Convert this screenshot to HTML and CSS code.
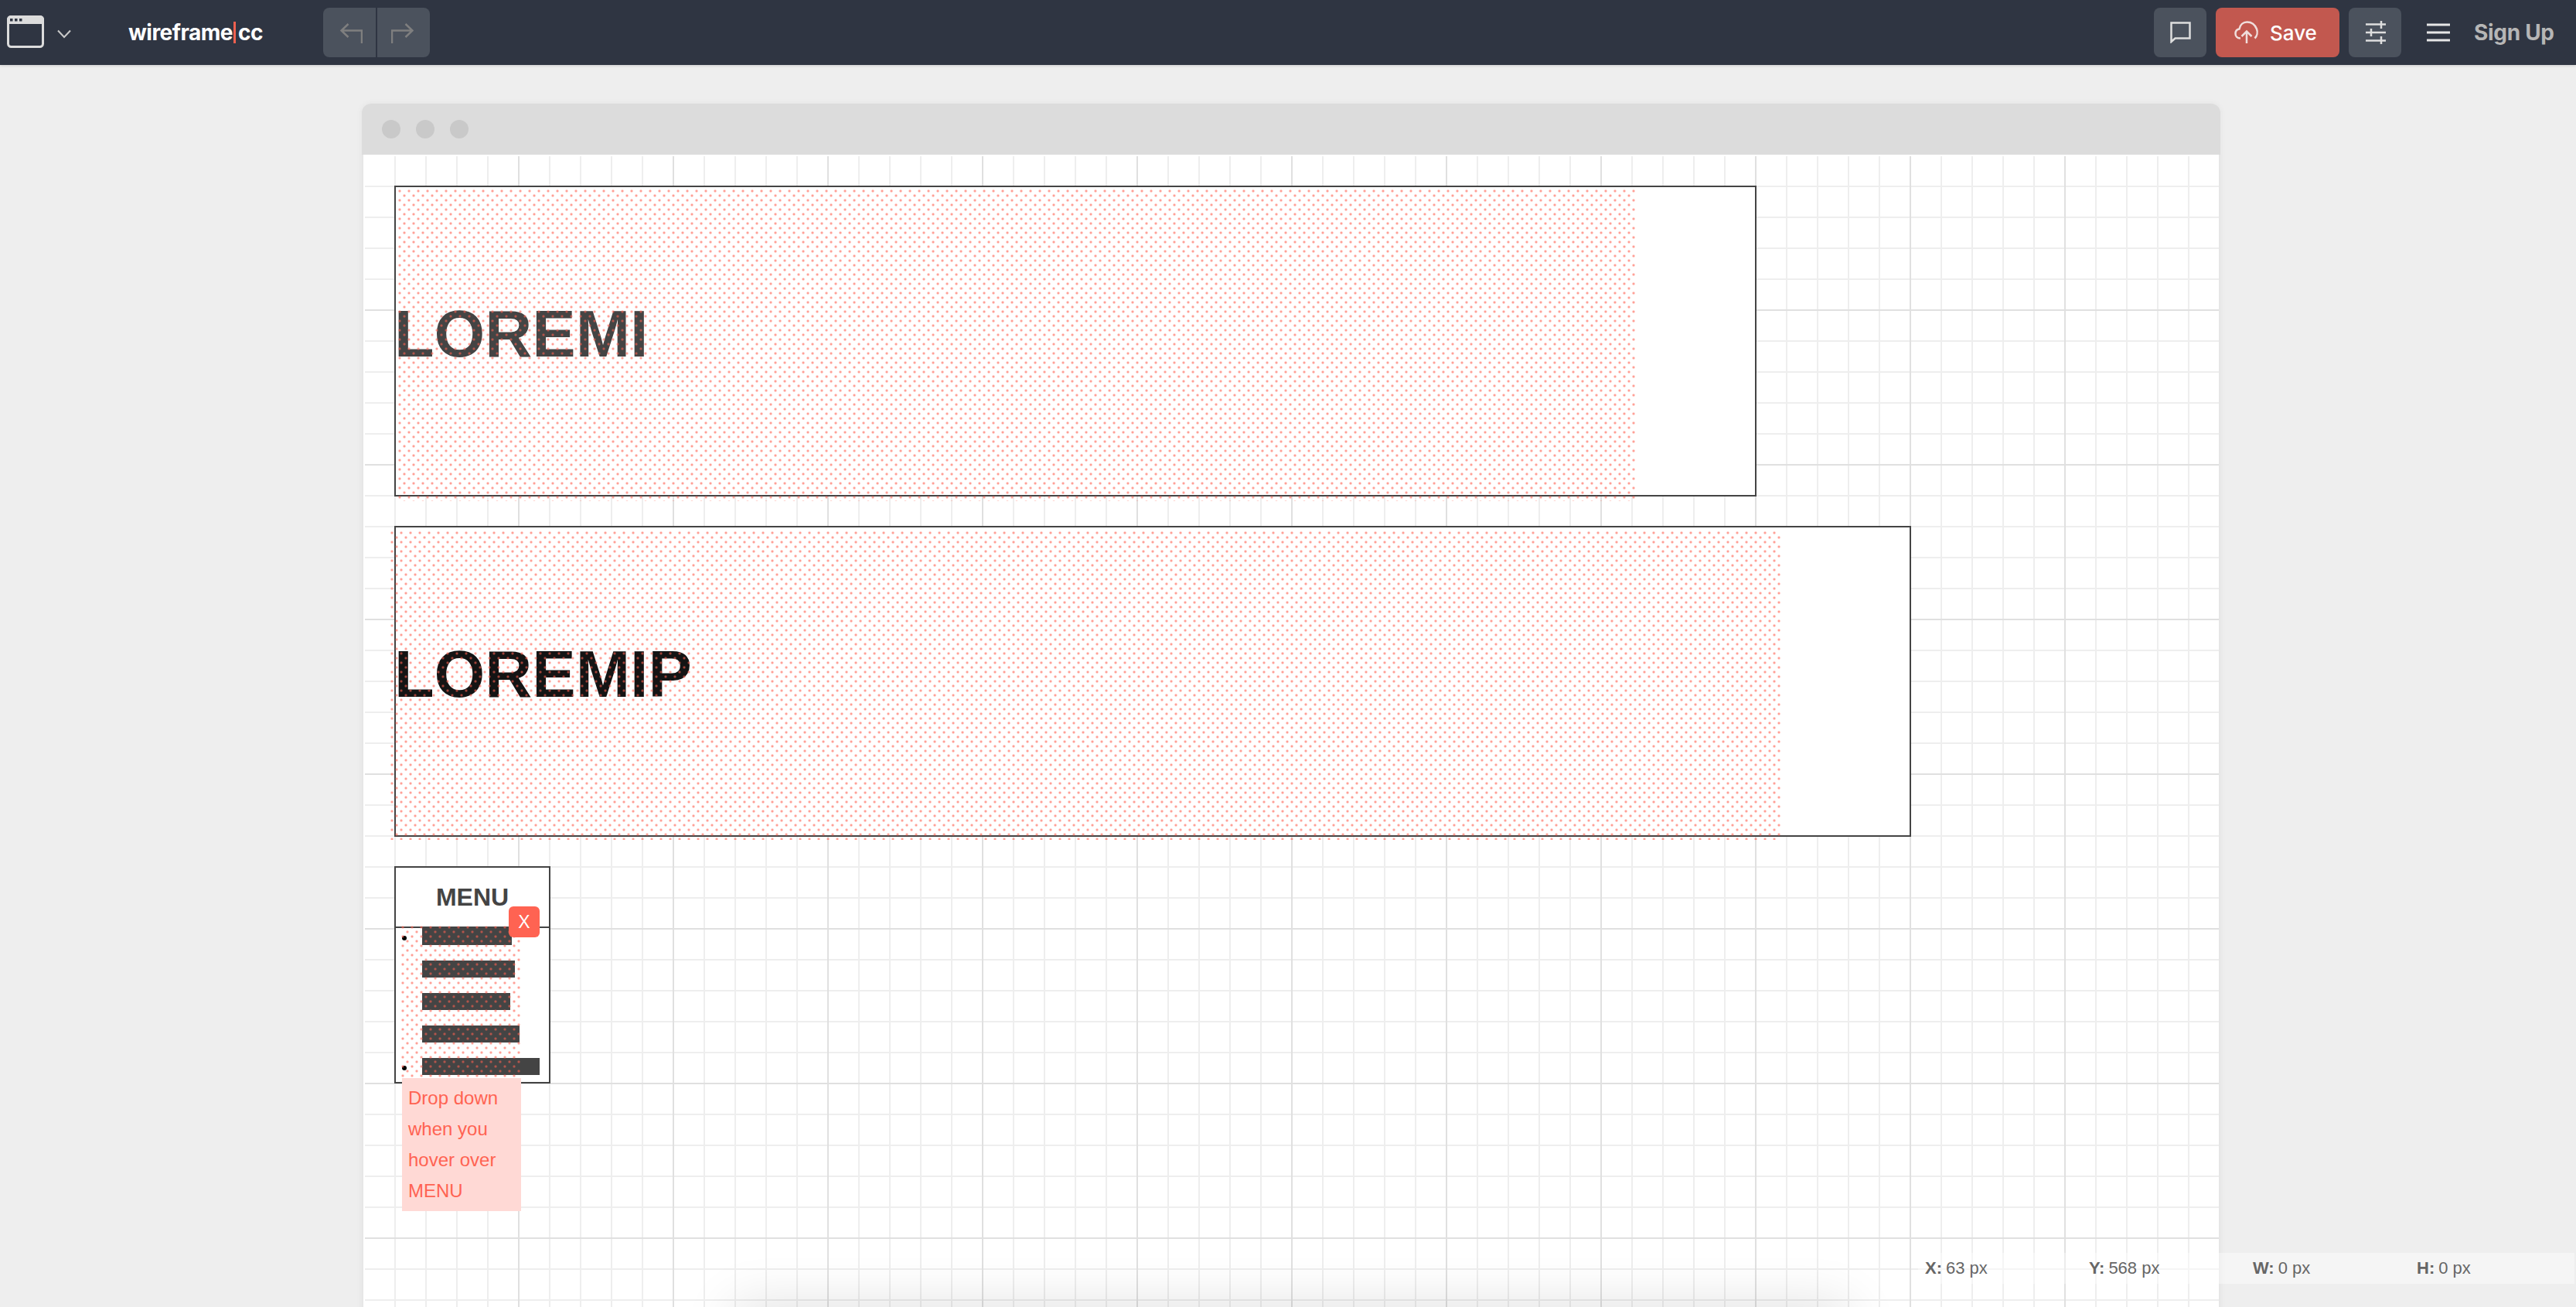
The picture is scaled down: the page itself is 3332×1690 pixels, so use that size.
FILE: index.html
```html
<!DOCTYPE html>
<html lang="en">
<head>
<meta charset="utf-8">
<title>wireframe.cc</title>
<link rel="stylesheet" href="styles.css">
</head>
<body>
<header class="topbar">
  <div class="topbar-left">
    <svg class="icon-browser" width="48" height="42" viewBox="0 0 48 42" aria-hidden="true">
      <path class="browser-head" d="M5 0H43A5 5 0 0 1 48 5V11H0V5A5 5 0 0 1 5 0Z"/>
      <rect class="browser-frame" x="1.5" y="1.5" width="45" height="39" rx="4"/>
      <rect class="browser-dot" x="4" y="4" width="3.5" height="3.5"/>
      <rect class="browser-dot" x="10" y="4" width="3.5" height="3.5"/>
      <rect class="browser-dot" x="16" y="4" width="3.5" height="3.5"/>
    </svg>
    <svg class="icon-chevron" width="18" height="12" viewBox="0 0 18 12" aria-hidden="true"><path d="M1 1.5L9 10L17 1.5"/></svg>
    <div class="logo">wireframe<span class="logo-bar"></span>cc</div>
    <div class="history">
      <button class="history-btn" type="button" aria-label="Undo">
        <svg width="29" height="26" viewBox="0 0 29 26" aria-hidden="true"><path d="M28 26V9.500H2M10.500 1L1.500 9.500L10.500 18"/></svg>
      </button>
      <button class="history-btn" type="button" aria-label="Redo">
        <svg width="29" height="26" viewBox="0 0 29 26" aria-hidden="true"><path d="M1 26V9.500H27M18.500 1L27.500 9.500L18.500 18"/></svg>
      </button>
    </div>
  </div>
  <div class="topbar-right">
    <button class="tool-btn" type="button" aria-label="Comments">
      <svg width="27" height="28" viewBox="0 0 27 28" aria-hidden="true"><path d="M1.500 26V1.500H25.500V21.500H6.500Z"/></svg>
    </button>
    <button class="save-btn" type="button">
      <svg width="32" height="30" viewBox="0 0 32 30" aria-hidden="true"><path d="M8 22.500C3.500 22.500 1.500 19.500 1.500 16.500C1.500 13.500 3.500 11 6.500 10.500C7.500 5 11.500 1.500 16.500 1.500C22.500 1.500 27 5.500 29 10.500C30.500 14.500 29.500 19.500 26.500 22.500M16 29V14M9.500 20L16 13.500L22.500 20"/></svg>
      <span>Save</span>
    </button>
    <button class="tool-btn" type="button" aria-label="Settings">
      <svg class="icon-sliders" width="26" height="30" viewBox="0 0 26 30" aria-hidden="true"><path d="M0 4.500H26M20 0V10M0 15H26M7 10V20M0 25.500H26M20 20V30"/></svg>
    </button>
    <svg class="icon-menu" width="30" height="24" viewBox="0 0 30 24" aria-hidden="true"><path d="M0 2H30M0 12H30M0 22H30"/></svg>
    <a class="signup">Sign Up</a>
  </div>
</header>

<main class="stage">
  <section class="window">
    <div class="window-bar">
      <span class="window-dot"></span>
      <span class="window-dot"></span>
      <span class="window-dot"></span>
    </div>
    <div class="canvas">
      <div class="grid">
        <div class="block block-one">
          <h2 class="block-title title-soft">LOREMI</h2>
          <div class="hatch hatch-one"></div>
        </div>
        <div class="block block-two">
          <h2 class="block-title title-dark">LOREMIP</h2>
          <div class="hatch hatch-two"></div>
        </div>
        <div class="menu">
          <div class="menu-head">MENU</div>
          <ul class="menu-list">
            <li class="menu-item"><span class="bar bar-1"></span></li>
            <li class="menu-item plain"><span class="bar bar-2"></span></li>
            <li class="menu-item plain"><span class="bar bar-3"></span></li>
            <li class="menu-item plain"><span class="bar bar-4"></span></li>
            <li class="menu-item"><span class="bar bar-5"></span></li>
          </ul>
          <div class="hatch hatch-menu"></div>
          <span class="badge">X</span>
          <p class="note">Drop down when you hover over MENU</p>
        </div>
      </div>
    </div>
  </section>
  <div class="sheet-shadow"></div>
  <dl class="status">
    <div class="status-cell"><dt>X:</dt><dd>63 px</dd></div>
    <div class="status-cell"><dt>Y:</dt><dd>568 px</dd></div>
    <div class="status-cell"><dt>W:</dt><dd>0 px</dd></div>
    <div class="status-cell"><dt>H:</dt><dd>0 px</dd></div>
  </dl>
</main>
</body>
</html>
```
FILE: styles.css
```css
* { box-sizing: border-box; }
html { margin: 0; padding: 0; height: 1690px; overflow: hidden; }
body {
  margin: 0;
  height: 1690px;
  overflow: hidden;
  background: #eeeeee;
  font-family: "Liberation Sans", Arial, sans-serif;
  display: flex;
  flex-direction: column;
}
button { border: 0; padding: 0; font: inherit; }
svg { display: block; flex: none; }

.topbar {
  position: relative;
  z-index: 3;
  height: 84px;
  flex: none;
  background: #2f3542;
  box-shadow: 0 1px 3px rgba(0, 0, 0, .15);
  display: flex;
  justify-content: space-between;
  align-items: center;
  padding: 0 28px 0 9px;
}
.topbar-left, .topbar-right { display: flex; align-items: center; }

.icon-browser { margin-bottom: 2px; }
.browser-head { fill: #dcdcdc; }
.browser-frame { fill: none; stroke: #dcdcdc; stroke-width: 3; }
.browser-dot { fill: #2f3542; }
.icon-chevron { margin: 3px 0 0 17px; }
.icon-chevron path { fill: none; stroke: #c9c9c9; stroke-width: 2; }

.logo {
  margin-left: 74px;
  width: 252px;
  display: flex;
  align-items: center;
  font-family: Inter, sans-serif;
  font-weight: 700;
  font-size: 28px;
  color: #ffffff;
  letter-spacing: -.5px;
}
.logo-bar { width: 3px; height: 28px; margin: 0 3px 0 1px; background: #f0604f; }

.history { display: flex; gap: 2px; }
.history-btn {
  width: 68px;
  height: 64px;
  background: #4b525d;
  display: flex;
  align-items: center;
  justify-content: center;
}
.history-btn:first-child { border-radius: 8px 0 0 8px; padding-left: 4px; }
.history-btn:last-child { border-radius: 0 8px 8px 0; padding-right: 4px; }
.history-btn svg { margin-top: 2px; }
.history-btn svg path { fill: none; stroke: #7f7f7f; stroke-width: 2.500; }

.tool-btn {
  width: 68px;
  height: 64px;
  border-radius: 8px;
  background: #4b525d;
  display: flex;
  align-items: center;
  justify-content: center;
}
.tool-btn svg path { fill: none; stroke: #dedede; stroke-width: 2.500; }
.tool-btn .icon-sliders { margin-left: 1px; }

.save-btn {
  width: 160px;
  height: 64px;
  margin: 0 12px;
  border-radius: 8px;
  background: #c2584f;
  color: #ffffff;
  display: flex;
  align-items: center;
  gap: 14px;
  padding-left: 24px;
  font-family: Inter, sans-serif;
  font-weight: 500;
  font-size: 26px;
}
.save-btn svg path { fill: none; stroke: #f0dedc; stroke-width: 2.500; }

.icon-menu { margin: 0 31px 0 33px; }
.icon-menu path { fill: none; stroke: #e6e6e6; stroke-width: 3; }

.signup {
  width: 104px;
  white-space: nowrap;
  font-family: Inter, sans-serif;
  font-weight: 700;
  font-size: 28px;
  letter-spacing: -.3px;
  color: #b6b6b6;
}

.stage {
  position: relative;
  flex: 1;
  min-height: 0;
  overflow: hidden;
  padding: 50px 0 0 468px;
}

.window {
  width: 2404px;
  height: 1640px;
  border-radius: 12px 12px 0 0;
  box-shadow: 0 0 8px rgba(0, 0, 0, .05);
  display: flex;
  flex-direction: column;
}
.window-bar {
  height: 66px;
  flex: none;
  border-radius: 12px 12px 0 0;
  background: #dcdcdc;
  display: flex;
  align-items: center;
  gap: 20px;
  padding-left: 26px;
}
.window-dot { width: 24px; height: 24px; border-radius: 50%; background: #c9c9c9; }

.canvas {
  flex: 1;
  min-height: 0;
  background: #ffffff;
  border-left: 2px solid #e6e6e6;
  border-right: 2px solid #e6e6e6;
  padding: 2px 0 0 2px;
  display: flex;
}
.grid {
  flex: 1;
  padding: 38px;
  background-color: #ffffff;
  background-image:
    linear-gradient(to right, transparent 198px, #e0e0e0 198px),
    linear-gradient(to bottom, transparent 198px, #e0e0e0 198px),
    linear-gradient(to right, transparent 38px, #eeeeee 38px),
    linear-gradient(to bottom, transparent 38px, #eeeeee 38px);
  background-size: 200px 200px, 200px 200px, 40px 40px, 40px 40px;
}

.block {
  position: relative;
  height: 402px;
  margin-bottom: 38px;
  border: 2px solid #444444;
  background: #ffffff;
  display: flex;
  align-items: center;
}
.block-one { width: 1762px; }
.block-two { width: 1962px; }
.block-title {
  margin: -18px 0 0 -2px;
  font-size: 84.5px;
  font-weight: 700;
  line-height: 1;
}
.title-soft { color: #444444; }
.title-dark { color: #141414; }

.hatch {
  position: absolute;
  pointer-events: none;
  background-image:
    radial-gradient(circle at 3px 3px, rgba(255, 96, 80, .6) 1.1px, rgba(255, 96, 80, .12) 1.8px, transparent 2.4px),
    radial-gradient(circle at 9px 9px, rgba(255, 96, 80, .6) 1.1px, rgba(255, 96, 80, .12) 1.8px, transparent 2.4px);
  background-size: 12px 12px;
}
.hatch-one { left: 2px; top: 2px; width: 1601px; height: 404px; }
.hatch-two { left: -8px; top: 4px; width: 1799px; height: 400px; }
.hatch-menu { left: 6px; top: 74px; width: 156px; height: 198px; }

.menu {
  position: relative;
  width: 202px;
  height: 281px;
  border: 2px solid #444444;
  background: #ffffff;
}
.menu-head {
  height: 78px;
  border-bottom: 2px solid #444444;
  font-size: 32px;
  font-weight: 700;
  color: #444444;
  line-height: 76px;
  text-align: center;
}
.menu-list {
  margin: 0;
  padding: 0 0 0 34px;
  list-style: none;
  display: flex;
  flex-direction: column;
  gap: 20px;
}
.menu-item { position: relative; height: 22px; display: flex; }
.menu-item::before {
  content: "";
  position: absolute;
  left: -26px;
  top: 10px;
  width: 6px;
  height: 6px;
  border-radius: 50%;
  background: #000000;
}
.menu-item.plain::before { display: none; }
.bar { display: block; height: 100%; background: #444444; }
.bar-1 { width: 116px; height: 24px; margin-top: -2px; }
.bar-2 { width: 120px; }
.bar-3 { width: 114px; }
.bar-4 { width: 126px; }
.bar-5 { width: 152px; }

.badge {
  position: absolute;
  left: 146px;
  top: 50px;
  width: 40px;
  height: 40px;
  border-radius: 6px;
  background: #ff6352;
  color: #ffffff;
  font-size: 23px;
  line-height: 40px;
  text-align: center;
}
.note {
  position: absolute;
  left: 8px;
  top: 272px;
  width: 154px;
  margin: 0;
  padding: 6px 8px;
  background: #ffd9d5;
  color: #ff6352;
  font-size: 24px;
  line-height: 40px;
}

.sheet-shadow {
  position: absolute;
  left: 950px;
  top: 1606px;
  width: 1440px;
  height: 60px;
  box-shadow: 0 0 70px rgba(0, 0, 0, .14);
}

.status {
  position: absolute;
  left: 2481px;
  top: 1536px;
  width: 849px;
  height: 40px;
  margin: 0;
  background: rgba(255, 255, 255, .4);
  display: grid;
  grid-template-columns: repeat(4, 212px);
  align-items: center;
  padding-left: 9px;
  font-size: 22px;
  color: #666666;
}
.status-cell { display: flex; gap: 5px; }
.status dt { font-weight: 700; }
.status dd { margin: 0; }
```
